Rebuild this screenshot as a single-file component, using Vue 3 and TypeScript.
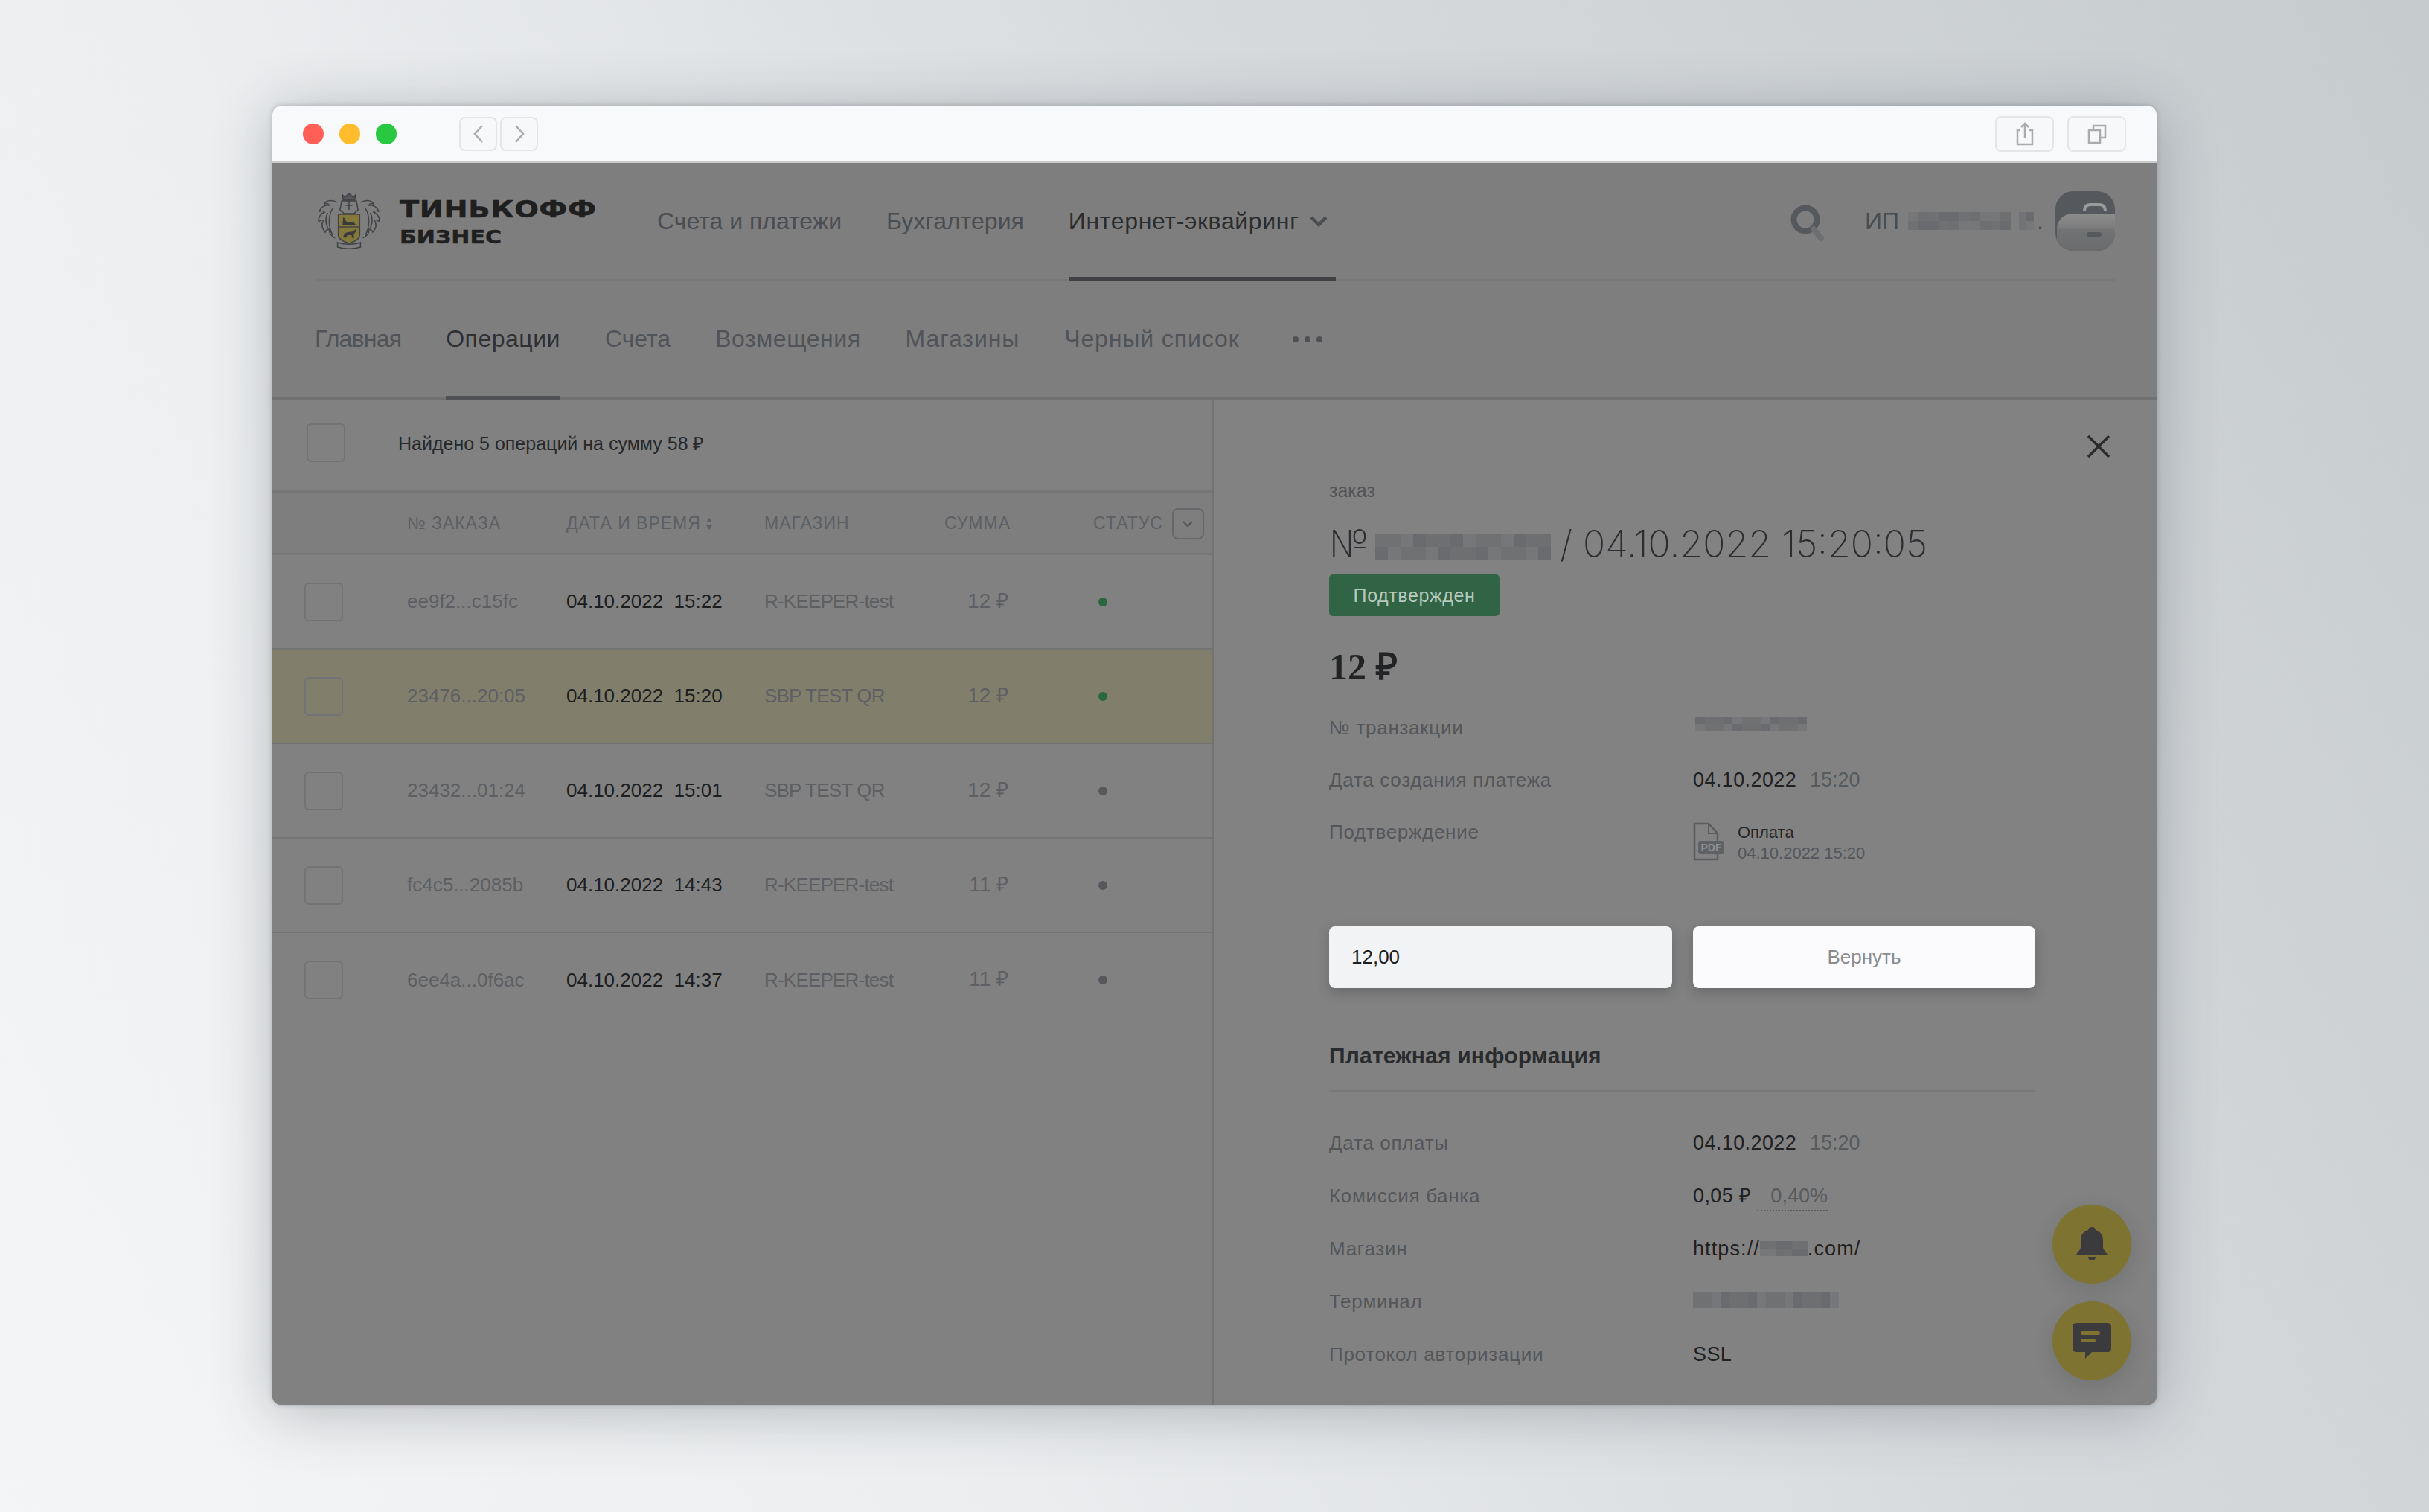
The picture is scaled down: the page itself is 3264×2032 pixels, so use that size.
<template>
  <div class="page">
    <div class="window">
      <div class="toolbar">
        <div class="lights">
          <span class="light red"></span>
          <span class="light yellow"></span>
          <span class="light green"></span>
        </div>
        <div class="arrows">
          <span class="tool-btn small">
            <svg width="16" height="28" viewBox="0 0 16 28"><path d="M13 3 3 14l10 11" /></svg>
          </span>
          <span class="tool-btn small">
            <svg width="16" height="28" viewBox="0 0 16 28"><path d="m3 3 10 11L3 25" /></svg>
          </span>
        </div>
        <div class="tool-right">
          <span class="tool-btn">
            <svg width="24" height="32" viewBox="0 0 24 32"><path d="M6 11H2v19h20V11h-4M12 21V2M7 7l5-5 5 5" /></svg>
          </span>
          <span class="tool-btn">
            <svg width="26" height="28" viewBox="0 0 26 28"><path d="M2 9h15v17H2zM8 9V3h16v16h-7" /></svg>
          </span>
        </div>
      </div>

      <header class="top-nav">
        <div class="logo">
          <svg class="emblem" width="88" height="80" viewBox="4 0 80 80" preserveAspectRatio="none">
            <g fill="none" stroke="#3f4144" stroke-width="1.4">
              <path d="M36 6l3 3 5-5 5 5 3-3-1 7H37z" fill="#55575a" />
              <path d="M35 14h18l2 12-5 5H38l-5-5z" />
              <path d="M40 20h8M44 14v12" />
              <path d="M30 16c-7-4-14-3-16 2 3-1 5 0 6 2-6-1-11 3-12 8 2-1 4-1 6 1-5 2-8 8-7 13 2-2 4-3 6-2-3 5-2 11 2 16 1-3 3-4 5-4-1 5 2 9 7 12" />
              <path d="M58 16c7-4 14-3 16 2-3-1-5 0-6 2 6-1 11 3 12 8-2-1-4-1-6 1 5 2 8 8 7 13-2-2-4-3-6-2 3 5 2 11-2 16-1-3-3-4-5-4 1 5-2 9-7 12" />
              <path d="M24 24c-5 8-6 24 0 36M64 24c5 8 6 24 0 36" />
              <path d="M18 30c-3 6-3 14 0 20M70 30c3 6 3 14 0 20" />
              <path d="M30 70c8 3 20 3 28 0v6c-8 3-20 3-28 0z" />
            </g>
            <path d="M31 32h26v28c0 6-7 9-13 11-6-2-13-5-13-11z" fill="#84793a" stroke="#3f4144" stroke-width="1.4" />
            <path d="M31 49h26" stroke="#3f4144" stroke-width="1.4" />
            <path d="M37 35l4 7 9 1 3 4H36zM37 62c1-4 3-6 6-6l6-1 3-3 1 3-3 3v6h-2l-1-4h-5l-2 4z" fill="#3a3b3c" />
          </svg>
          <div class="logo-text">
            <div class="logo-main">ТИНЬКОФФ</div>
            <div class="logo-sub">БИЗНЕС</div>
          </div>
        </div>
        <nav class="main-links">
          <a class="main-link">Счета и платежи</a>
          <a class="main-link">Бухгалтерия</a>
          <a class="main-link active">
            <span class="active-text">Интернет-эквайринг</span>
            <svg width="26" height="16" viewBox="0 0 26 16"><path d="m3 3 10 10L23 3" /></svg>
          </a>
        </nav>
        <div class="account">
          <svg class="search" width="46" height="50" viewBox="0 0 46 50">
            <circle cx="20" cy="20" r="15.5" fill="none" stroke="#55585d" stroke-width="8" />
            <path d="m31 33 10 12" stroke="#6c6e71" stroke-width="8" stroke-linecap="round" />
          </svg>
          <span class="ip">ИП</span>
          <span class="mosaic name-mosaic">
            <i v-for="(c, i) in nameCells" :key="i" :style="{ background: c }"></i>
          </span>
          <span class="mosaic initial-mosaic">
            <i v-for="(c, i) in initialCells" :key="i" :style="{ background: c }"></i>
          </span>
          <span class="ip dot">.</span>
          <svg class="avatar" width="80" height="80" viewBox="0 0 80 80">
            <defs>
              <linearGradient id="case" x1="0" y1="0" x2="0" y2="1">
                <stop offset="0" stop-color="#8c8c8c" />
                <stop offset="0.4" stop-color="#7c7c7c" />
                <stop offset="0.42" stop-color="#727375" />
                <stop offset="1" stop-color="#6a6b6d" />
              </linearGradient>
              <clipPath id="avatar-clip"><rect width="80" height="80" rx="24" /></clipPath>
            </defs>
            <rect width="80" height="80" rx="24" fill="#55585d" />
            <path d="M39 27c0-6 3-9 8-9h12c5 0 8 3 8 9" fill="none" stroke="#9a9a9a" stroke-width="4" />
            <path clip-path="url(#avatar-clip)" d="M2 80V52c0-14 10-22 22-22h56v50z" fill="url(#case)" />
            <rect x="42" y="55" width="20" height="6" rx="3" fill="#55585d" />
          </svg>
        </div>
      </header>

      <nav class="sub-nav">
        <a v-for="tab in tabs" :key="tab" class="sub-link" :class="{ active: tab === 'Операции' }">{{ tab }}</a>
        <span class="more"><i></i><i></i><i></i></span>
      </nav>

      <div class="content">
        <section class="list">
          <div class="summary">
            <span class="check"></span>
            <span class="summary-text">Найдено 5 операций на сумму 58 ₽</span>
          </div>
          <div class="grid head">
            <span></span>
            <span>№ ЗАКАЗА</span>
            <span class="sortable">
              ДАТА И ВРЕМЯ
              <svg width="10" height="18" viewBox="0 0 10 18"><path d="M5 1 9 7H1zM5 17 1 11h8z" /></svg>
            </span>
            <span>МАГАЗИН</span>
            <span class="right">СУММА</span>
            <span class="status-head">
              СТАТУС
              <span class="status-btn">
                <svg width="16" height="10" viewBox="0 0 16 10"><path d="m2 2 6 6 6-6" /></svg>
              </span>
            </span>
          </div>
          <div v-for="op in operations" :key="op.id" class="grid row" :class="{ selected: op.selected }">
            <span><span class="check"></span></span>
            <span class="muted">{{ op.id }}</span>
            <span class="date">{{ op.date }}&nbsp; {{ op.time }}</span>
            <span class="muted shop">{{ op.shop }}</span>
            <span class="muted right sum">{{ op.sum }}</span>
            <span class="status-cell"><i class="status-dot" :class="{ ok: op.ok }"></i></span>
          </div>
        </section>

        <section class="details">
          <svg class="close" width="32" height="32" viewBox="0 0 32 32"><path d="m2 2 28 28M30 2 2 30" /></svg>
          <div class="kicker">заказ</div>
          <h1 class="title">
            № <span class="mosaic title-mosaic"><i v-for="(c, i) in titleCells" :key="i" :style="{ background: c }"></i></span> / 04.10.2022 15:20:05
          </h1>
          <div class="badge">Подтвержден</div>
          <div class="amount">12 ₽</div>

          <div class="info first">
            <span class="label">№ транзакции</span>
            <span class="mosaic tx-mosaic"><i v-for="(c, i) in txCells" :key="i" :style="{ background: c }"></i></span>
          </div>
          <div class="info">
            <span class="label">Дата создания платежа</span>
            <span class="value">04.10.2022 <em>15:20</em></span>
          </div>
          <div class="info">
            <span class="label">Подтверждение</span>
            <span class="doc">
              <svg width="42" height="52" viewBox="0 0 42 52">
                <path d="M2 2h19l12 13v35H2z" fill="none" stroke="#5a5c60" stroke-width="2.5" />
                <path d="M21 2v13h12" fill="none" stroke="#5a5c60" stroke-width="2" />
                <rect x="7" y="25" width="35" height="18" rx="3" fill="#5f6165" />
                <text x="24.5" y="39" class="pdf">PDF</text>
              </svg>
              <span class="doc-text">
                <span class="doc-name">Оплата</span>
                <span class="doc-date">04.10.2022 15:20</span>
              </span>
            </span>
          </div>

          <div class="refund">
            <input class="refund-input" value="12,00" />
            <button class="refund-btn">Вернуть</button>
          </div>

          <h2 class="section-title">Платежная информация</h2>
          <div class="info wide">
            <span class="label">Дата оплаты</span>
            <span class="value">04.10.2022 <em>15:20</em></span>
          </div>
          <div class="info wide">
            <span class="label">Комиссия банка</span>
            <span class="value">0,05 ₽ <em class="dotted">0,40%</em></span>
          </div>
          <div class="info wide">
            <span class="label">Магазин</span>
            <span class="value link">https://<span class="mosaic url-mosaic"><i v-for="(c, i) in urlCells" :key="i" :style="{ background: c }"></i></span>.com/</span>
          </div>
          <div class="info wide">
            <span class="label">Терминал</span>
            <span class="mosaic term-mosaic"><i v-for="(c, i) in termCells" :key="i" :style="{ background: c }"></i></span>
          </div>
          <div class="info wide">
            <span class="label">Протокол авторизации</span>
            <span class="value">SSL</span>
          </div>
        </section>
      </div>

      <button class="fab bell">
        <svg width="44" height="48" viewBox="0 0 44 48">
          <path d="M22 1c3 0 5 2 5 4 7 2 10 7 10 14v9c0 3 3 5 6 10H1c3-5 6-7 6-10v-9C7 12 10 7 17 5c0-2 2-4 5-4z" fill="#3b3b3e" />
          <path d="M17 41h10c0 3-2 5-5 5s-5-2-5-5z" fill="#3b3b3e" />
        </svg>
      </button>
      <button class="fab chat">
        <svg width="54" height="50" viewBox="0 0 54 50">
          <path d="M6 1h42c3 0 5 2 5 5v29c0 3-2 5-5 5H27l-9 9v-9H6c-3 0-5-2-5-5V6c0-3 2-5 5-5z" fill="#3b3b3e" />
          <rect x="12" y="12" width="26" height="5" rx="2.5" fill="#7e7330" />
          <rect x="12" y="22" width="20" height="5" rx="2.5" fill="#7e7330" />
        </svg>
      </button>
    </div>
  </div>
</template>

<script setup lang="ts">
interface Operation {
  id: string
  date: string
  time: string
  shop: string
  sum: string
  ok: boolean
  selected?: boolean
}

const tabs = ['Главная', 'Операции', 'Счета', 'Возмещения', 'Магазины', 'Черный список']

const operations: Operation[] = [
  { id: 'ee9f2...c15fc', date: '04.10.2022', time: '15:22', shop: 'R-KEEPER-test', sum: '12 ₽', ok: true },
  { id: '23476...20:05', date: '04.10.2022', time: '15:20', shop: 'SBP TEST QR', sum: '12 ₽', ok: true, selected: true },
  { id: '23432...01:24', date: '04.10.2022', time: '15:01', shop: 'SBP TEST QR', sum: '12 ₽', ok: false },
  { id: 'fc4c5...2085b', date: '04.10.2022', time: '14:43', shop: 'R-KEEPER-test', sum: '11 ₽', ok: false },
  { id: '6ee4a...0f6ac', date: '04.10.2022', time: '14:37', shop: 'R-KEEPER-test', sum: '11 ₽', ok: false },
]

// размытые куски: просто набор серых клеток
const shades = ['#68696c', '#6e6f71', '#727375', '#767779', '#6b6c6f', '#707173', '#78797a', '#6a6b6e']

const makeCells = (count: number, seed: number): string[] =>
  Array.from({ length: count }, (_, i) => shades[(i * i * 3 + i * seed + seed) % shades.length])

const nameCells = makeCells(20, 3)
const initialCells = makeCells(4, 2)
const titleCells = makeCells(28, 5)
const txCells = makeCells(24, 7)
const urlCells = makeCells(12, 1)
const termCells = makeCells(32, 5)
</script>

<style>
html,
body {
  margin: 0;
  background: #e4e6e8;
}
</style>

<style scoped>
.page {
  box-sizing: border-box;
  width: 3264px;
  height: 2032px;
  padding: 142px 0 0 366px;
  overflow: hidden;
  background: linear-gradient(62deg, #f4f5f6 0%, #eceef0 30%, #d7dadd 62%, #c6cbce 100%);
  font-family: "Liberation Sans", Arial, sans-serif;
  color: #1f1f20;
}

.window {
  position: relative;
  width: 2532px;
  height: 1746px;
  border-radius: 12px;
  overflow: hidden;
  background: #7e7e7e;
  box-shadow: 0 10px 80px rgba(60, 66, 72, 0.32), 0 0 6px rgba(60, 66, 72, 0.3);
  display: flex;
  flex-direction: column;
}

/* тулбар браузера */
.toolbar {
  flex: none;
  box-sizing: border-box;
  height: 77px;
  display: flex;
  align-items: center;
  padding: 0 41px 0 41px;
  background: #f8f9fa;
  border-bottom: 2px solid #c9cbcc;
}

.lights {
  display: flex;
  gap: 21px;
}

.light {
  width: 28px;
  height: 28px;
  border-radius: 50%;
}

.red { background: #ff5f57; }
.yellow { background: #ffbd2e; }
.green { background: #28c840; }

.arrows {
  display: flex;
  gap: 4px;
  margin-left: 84px;
}

.tool-right {
  display: flex;
  gap: 18px;
  margin-left: auto;
}

.tool-btn {
  box-sizing: border-box;
  width: 79px;
  height: 48px;
  display: flex;
  align-items: center;
  justify-content: center;
  border: 2px solid #e3e5e6;
  border-radius: 8px;
  background: #f7f8f9;
}

.tool-btn.small {
  width: 51px;
  height: 46px;
}

.tool-btn svg path {
  fill: none;
  stroke: #a9abad;
  stroke-width: 2.5;
}

/* верхнее меню */
.top-nav {
  flex: none;
  box-sizing: border-box;
  height: 158px;
  margin: 0 56px 0 59px;
  display: flex;
  align-items: center;
  border-bottom: 2px solid #787878;
}

.logo {
  display: flex;
  align-items: center;
  width: 458px;
  flex: none;
  margin-top: -2px;
}

.emblem {
  flex: none;
  margin-right: 24px;
}

.logo-text {
  padding-top: 5px;
}

.logo-main,
.logo-sub {
  font-family: "DejaVu Sans", sans-serif;
  font-weight: 700;
  color: #1f1f20;
  white-space: nowrap;
  transform-origin: left center;
  transform: scaleX(1.2);
  -webkit-text-stroke: 0.5px #1f1f20;
}

.logo-main {
  font-size: 32px;
  line-height: 36px;
  letter-spacing: 0.5px;
}

.logo-sub {
  font-size: 25px;
  line-height: 30px;
  margin-top: 5px;
}

.main-links {
  display: flex;
  align-self: stretch;
  gap: 60px;
}

.main-link {
  position: relative;
  display: flex;
  align-items: center;
  gap: 14px;
  font-size: 32px;
  color: #4a4d51;
  white-space: nowrap;
}

.main-link svg path {
  fill: none;
  stroke: #4a4d51;
  stroke-width: 4.5;
}

.main-link.active {
  color: #2b2c2e;
  padding-right: 10px;
}

.active-text {
  letter-spacing: 0.65px;
}

.main-link.active::after {
  content: "";
  position: absolute;
  left: 0;
  right: 0;
  bottom: -2px;
  height: 5px;
  background: #404144;
}

.account {
  margin-left: auto;
  display: flex;
  align-items: center;
}

.search {
  margin-right: 54px;
  margin-top: 6px;
}

.ip {
  font-size: 32px;
  color: #4a4d50;
}

.dot {
  margin-left: 4px;
  margin-right: 16px;
}

.mosaic {
  display: inline-grid;
  vertical-align: middle;
  overflow: hidden;
}

.mosaic i {
  display: block;
}

.name-mosaic {
  margin-left: 12px;
  width: 138px;
  height: 24px;
  grid-template-columns: repeat(10, 1fr);
}

.initial-mosaic {
  margin-left: 11px;
  width: 20px;
  height: 24px;
  grid-template-columns: repeat(2, 1fr);
}

.avatar {
  display: block;
}

/* второе меню */
.sub-nav {
  flex: none;
  box-sizing: border-box;
  height: 160px;
  padding-left: 57px;
  display: flex;
  align-items: center;
  gap: 60px;
  border-bottom: 3px solid #717171;
}

.sub-link {
  position: relative;
  align-self: stretch;
  display: flex;
  align-items: center;
  font-size: 32px;
  letter-spacing: 0.55px;
  color: #505357;
  white-space: nowrap;
}

.sub-link:first-child {
  letter-spacing: -0.8px;
}

.sub-link:nth-child(2) {
  letter-spacing: 0.5px;
}

.sub-link:nth-child(3) {
  letter-spacing: 0;
}

.sub-link:nth-child(5),
.sub-link:nth-child(6) {
  letter-spacing: 0.9px;
}

.sub-link.active {
  color: #2f3033;
}

.sub-link.active::after {
  content: "";
  position: absolute;
  left: 0;
  right: 0;
  bottom: -3px;
  height: 5px;
  background: #505154;
}

.more {
  display: flex;
  gap: 8px;
  margin-left: 11px;
}

.more i {
  width: 8px;
  height: 8px;
  border-radius: 50%;
  background: #4e5054;
}

/* основная часть */
.content {
  flex: 1;
  min-height: 0;
  display: flex;
}

.list {
  flex: none;
  width: 1265px;
  box-sizing: border-box;
  border-right: 2px solid #737373;
  background: #818181;
}

.summary {
  box-sizing: border-box;
  height: 125px;
  display: flex;
  align-items: center;
  padding: 0 0 6px 46px;
  border-bottom: 3px solid #767676;
}

.summary-text {
  margin-left: 71px;
  font-size: 25px;
  color: #27282a;
}

.check {
  display: block;
  box-sizing: border-box;
  width: 52px;
  height: 52px;
  border: 2px solid #727375;
  border-radius: 6px;
}

.grid {
  display: grid;
  grid-template-columns: 181px 214px 266px 240px 91px 1fr;
  align-items: center;
}

.head {
  box-sizing: border-box;
  height: 84px;
  padding-top: 2px;
  border-bottom: 3px solid #767676;
  background: #7e7e7e;
  font-size: 23px;
  letter-spacing: 1px;
  color: #5c5f63;
}

.sortable {
  display: flex;
  align-items: center;
  gap: 6px;
  white-space: nowrap;
}

.sortable svg path {
  fill: #5c5f63;
}

.status-head {
  display: flex;
  align-items: center;
  gap: 12px;
  margin-left: 111px;
  white-space: nowrap;
}

.status-btn {
  box-sizing: border-box;
  flex: none;
  width: 43px;
  height: 42px;
  display: flex;
  align-items: center;
  justify-content: center;
  border: 2px solid #65676a;
  border-radius: 8px;
}

.status-btn svg path {
  fill: none;
  stroke: #515357;
  stroke-width: 2;
}

.row {
  box-sizing: border-box;
  height: 127px;
  border-bottom: 2px solid #747474;
  font-size: 26px;
}

.row:last-child {
  height: 126px;
  border-bottom: none;
}

.row.selected {
  background: #817e6b;
}

.row > span:first-child {
  padding-left: 43px;
}

.muted {
  color: #5d5f63;
  white-space: nowrap;
}

.date {
  color: #1d1e1f;
  white-space: nowrap;
}

.shop {
  letter-spacing: -0.8px;
}

.right {
  text-align: right;
  white-space: nowrap;
}

.sum {
  padding-right: 3px;
  font-size: 28px;
  line-height: 28px;
  margin-top: -2px;
}

.status-cell {
  padding-left: 118px;
}

.status-dot {
  display: block;
  width: 12px;
  height: 12px;
  border-radius: 50%;
  background: #56585c;
}

.status-dot.ok {
  background: #2a673f;
}

/* карточка заказа */
.details {
  position: relative;
  flex: 1;
  min-width: 0;
  box-sizing: border-box;
  padding: 107px 163px 0 155px;
  background: #828282;
}

.close {
  position: absolute;
  top: 47px;
  right: 62px;
}

.close path {
  fill: none;
  stroke: #2a2b2d;
  stroke-width: 3.5;
}

.kicker {
  font-size: 25px;
  line-height: 30px;
  color: #525458;
}

.title {
  margin: 27px 0 0;
  font-family: Inter, sans-serif;
  font-weight: 200;
  font-size: 50px;
  line-height: 60px;
  color: #2c2d30;
  white-space: nowrap;
}

.title-mosaic {
  width: 236px;
  height: 36px;
  margin: 0 -2px 0 -6px;
  grid-template-columns: repeat(14, 1fr);
}

.badge {
  box-sizing: border-box;
  width: 229px;
  height: 56px;
  margin-top: 11px;
  display: flex;
  align-items: center;
  justify-content: center;
  border-radius: 5px;
  background: #316345;
  color: #b8c9bd;
  font-size: 25px;
  letter-spacing: 0.6px;
}

.amount {
  margin-top: 39px;
  font-family: "Liberation Serif", serif;
  font-weight: 700;
  font-size: 50px;
  line-height: 58px;
  color: #222325;
}

.info {
  display: flex;
  align-items: flex-start;
  min-height: 30px;
  margin-top: 40px;
  font-size: 26px;
  line-height: 30px;
}

.info.first {
  margin-top: 38px;
}

.info.wide {
  margin-top: 41px;
}

.label {
  flex: none;
  width: 489px;
  color: #54565a;
  white-space: nowrap;
  letter-spacing: 0.7px;
}

.value {
  font-size: 27px;
  letter-spacing: 0.4px;
  color: #1f2022;
  white-space: nowrap;
}

.value em {
  font-style: normal;
  color: #575a5d;
  margin-left: 10px;
  letter-spacing: 0;
}

.value em.dotted {
  padding: 0 0 4px 18px;
  margin-left: 0;
  border-bottom: 2px dotted #575a5d;
}

.tx-mosaic {
  margin: 0 0 0 3px;
  width: 150px;
  height: 20px;
  grid-template-columns: repeat(12, 1fr);
}

.doc {
  display: flex;
  gap: 18px;
  margin-top: 2px;
}

.doc-text {
  display: flex;
  flex-direction: column;
}

.doc-name {
  font-size: 22px;
  line-height: 28px;
  color: #26272a;
}

.doc-date {
  font-size: 22px;
  line-height: 28px;
  color: #54565a;
}

.pdf {
  font-family: "Liberation Sans", sans-serif;
  font-size: 14px;
  font-weight: 700;
  text-anchor: middle;
  fill: #8e8f91;
}

.refund {
  display: flex;
  gap: 28px;
  margin-top: 84px;
}

.refund-input,
.refund-btn {
  box-sizing: border-box;
  height: 83px;
  border: none;
  border-radius: 8px;
  box-shadow: 0 6px 16px rgba(40, 42, 46, 0.28);
  font-family: "Liberation Sans", sans-serif;
  font-size: 26px;
}

.refund-input {
  width: 461px;
  padding: 0 30px;
  background: #f2f3f5;
  color: #1d1e20;
  outline: none;
}

.refund-btn {
  width: 460px;
  background: #fbfbfd;
  color: #8b8c8e;
}

.section-title {
  box-sizing: border-box;
  width: 949px;
  margin: 74px 0 0;
  padding-bottom: 29px;
  border-bottom: 2px solid #787878;
  font-size: 30px;
  font-weight: 700;
  line-height: 34px;
  letter-spacing: 0.2px;
  color: #2a2b2d;
}

.section-title + .info {
  margin-top: 54px;
}

.link {
  display: inline-flex;
  align-items: center;
  letter-spacing: 1.1px;
}

.url-mosaic {
  width: 64px;
  height: 20px;
  grid-template-columns: repeat(6, 1fr);
}

.term-mosaic {
  margin-top: 2px;
  width: 196px;
  height: 22px;
  grid-template-columns: repeat(16, 1fr);
}

.fab {
  position: absolute;
  left: 2392px;
  width: 106px;
  height: 106px;
  padding: 0;
  border: none;
  border-radius: 50%;
  display: flex;
  align-items: center;
  justify-content: center;
  background: #7e7330;
  box-shadow: 0 8px 26px rgba(60, 62, 66, 0.22);
}

.bell {
  top: 1477px;
}

.chat {
  top: 1607px;
}
</style>
